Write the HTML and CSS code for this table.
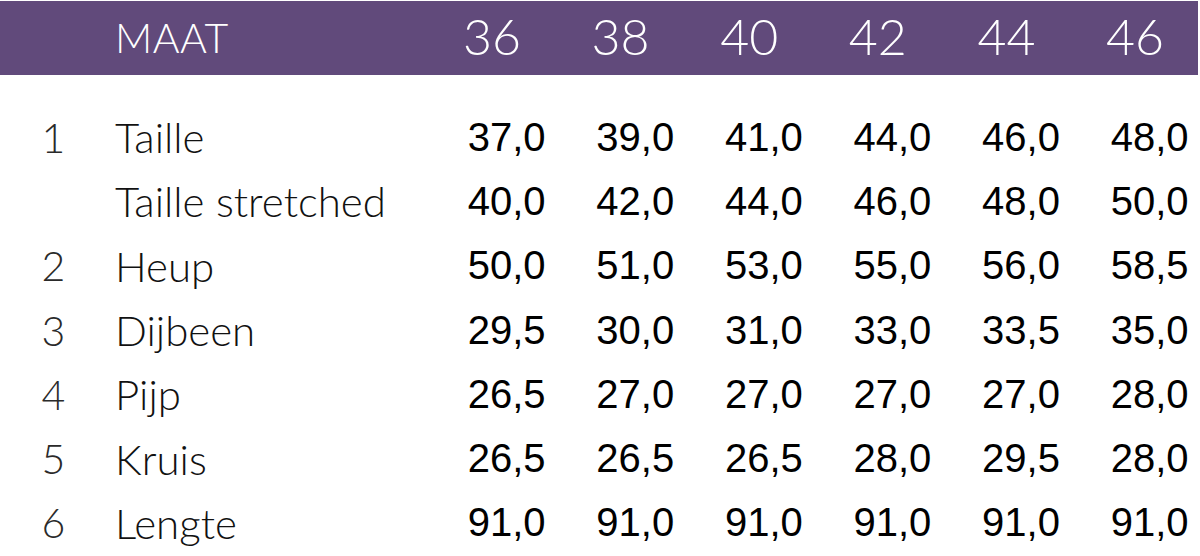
FILE: index.html
```html
<!DOCTYPE html>
<html>
<head>
<meta charset="utf-8">
<link rel="stylesheet" href="styles.css">
</head>
<body>
<div class="table">
  <div class="row head">
    <div class="num"></div>
    <div class="label">MAAT</div>
    <div class="size">36</div>
    <div class="size">38</div>
    <div class="size">40</div>
    <div class="size">42</div>
    <div class="size">44</div>
    <div class="size">46</div>
  </div>
  <div class="body">
    <div class="row">
      <div class="num">1</div><div class="label">Taille</div>
      <div class="val">37,0</div><div class="val">39,0</div><div class="val">41,0</div><div class="val">44,0</div><div class="val">46,0</div><div class="val">48,0</div>
    </div>
    <div class="row">
      <div class="num"></div><div class="label">Taille stretched</div>
      <div class="val">40,0</div><div class="val">42,0</div><div class="val">44,0</div><div class="val">46,0</div><div class="val">48,0</div><div class="val">50,0</div>
    </div>
    <div class="row">
      <div class="num">2</div><div class="label">Heup</div>
      <div class="val">50,0</div><div class="val">51,0</div><div class="val">53,0</div><div class="val">55,0</div><div class="val">56,0</div><div class="val">58,5</div>
    </div>
    <div class="row">
      <div class="num">3</div><div class="label">Dijbeen</div>
      <div class="val">29,5</div><div class="val">30,0</div><div class="val">31,0</div><div class="val">33,0</div><div class="val">33,5</div><div class="val">35,0</div>
    </div>
    <div class="row">
      <div class="num">4</div><div class="label">Pijp</div>
      <div class="val">26,5</div><div class="val">27,0</div><div class="val">27,0</div><div class="val">27,0</div><div class="val">27,0</div><div class="val">28,0</div>
    </div>
    <div class="row">
      <div class="num">5</div><div class="label">Kruis</div>
      <div class="val">26,5</div><div class="val">26,5</div><div class="val">26,5</div><div class="val">28,0</div><div class="val">29,5</div><div class="val">28,0</div>
    </div>
    <div class="row">
      <div class="num">6</div><div class="label">Lengte</div>
      <div class="val">91,0</div><div class="val">91,0</div><div class="val">91,0</div><div class="val">91,0</div><div class="val">91,0</div><div class="val">91,0</div>
    </div>
  </div>
</div>
</body>
</html>
```
FILE: styles.css
```css
html, body {
  margin: 0;
  padding: 0;
  background: #ffffff;
}

.table {
  width: 1200px;
}

.row {
  display: grid;
  grid-template-columns: 115px 302px repeat(6, 128.6px);
  align-items: center;
  height: 64.3px;
}

.head {
  height: 74px;
  margin-top: 1px;
  background: #614a7b;
  color: #ffffff;
  width: 1198px;
  font-family: "Lato", "Liberation Sans", sans-serif;
  font-weight: 300;
}

.head .label {
  font-size: 41px;
  letter-spacing: 0.5px;
  margin-top: -2px;
}

.head .size {
  font-size: 50px;
  padding-left: 46px;
  margin-top: -4px;
}

.body {
  padding-top: 30px;
}

.num {
  font-family: "Lato", "Liberation Sans", sans-serif;
  font-weight: 300;
  font-size: 41px;
  color: #2a2a2a;
  text-align: center;
  padding-right: 8px;
}

.body .label {
  font-family: "Lato", "Liberation Sans", sans-serif;
  font-weight: 300;
  font-size: 42px;
  color: #111111;
}

.val {
  font-family: "Liberation Sans", Arial, sans-serif;
  font-size: 40px;
  color: #000000;
  text-align: right;
}
```
